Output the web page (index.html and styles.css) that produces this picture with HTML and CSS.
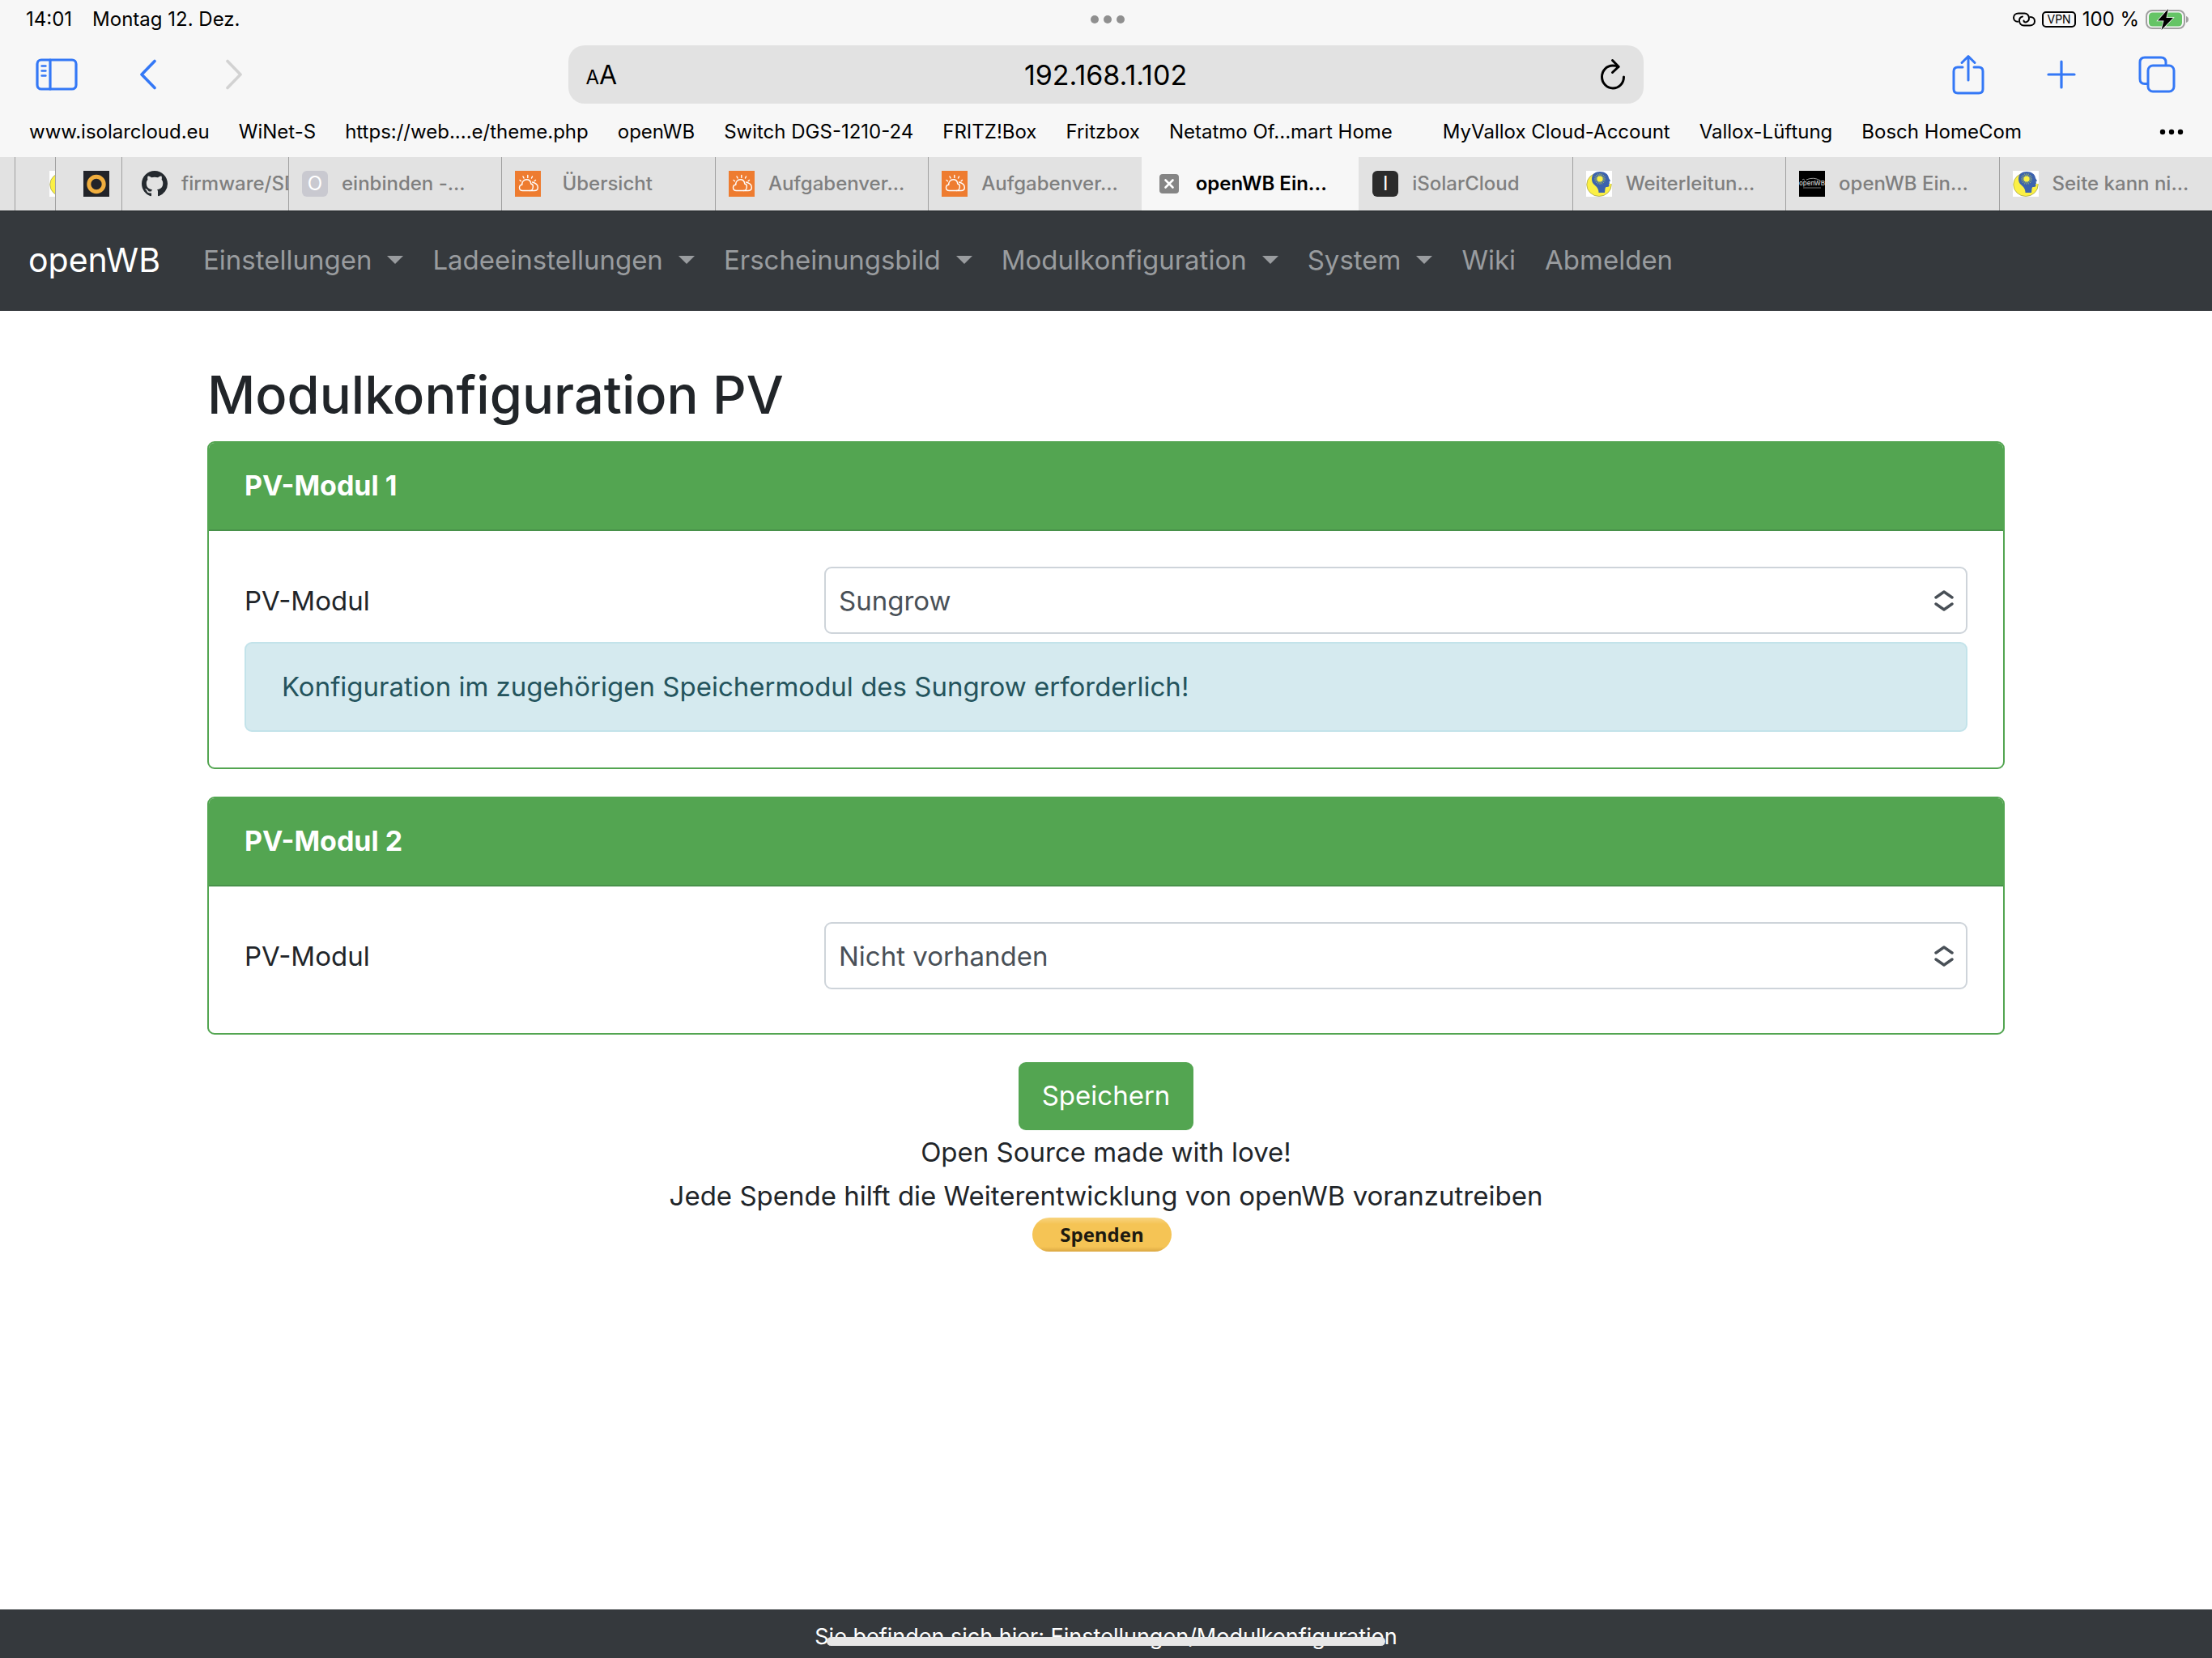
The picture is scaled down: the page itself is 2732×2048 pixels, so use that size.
FILE: index.html
```html
<!DOCTYPE html>
<html lang="de">
<head>
  <meta charset="UTF-8" />
  <meta name="viewport" content="width=device-width, initial-scale=1.0" />
  <title>openWB Einstellungen</title>
  <link rel="stylesheet" href="styles.css">
</head>
<body>
  <!-- shared icons -->
  <svg class="defs" width="0" height="0" aria-hidden="true">
    <symbol id="weather" viewBox="0 0 32 32">
      <rect width="32" height="32" fill="#ee7c30"/>
      <g fill="none" stroke="#fff" stroke-width="1.4" stroke-linecap="round" stroke-linejoin="round">
        <path d="M8 24.500C5 24.500 4 22.500 4 20.800C4 18.800 5.500 17.300 7.300 17.200C7 13.500 9.500 10.800 12.800 10.800C16.200 10.800 18 13 18.200 16C20.500 16.500 21 18.500 20.800 20C20.500 23 19 24.500 17 24.500Z" transform="translate(1.500 0)"/>
        <path d="M21.500 14C25.500 15 28.300 17.500 28.300 20.500C28.300 23.500 26.500 24.500 24 24.500H18.500"/>
        <path d="M15.800 5.500V8.500M10 7L11 9M21.500 7L20.500 9M6 11.500L7.500 12.700M25.500 11.500L24 12.700"/>
      </g>
    </symbol>
    <symbol id="head" viewBox="0 0 32 32">
      <rect width="32" height="32" fill="#fff"/>
      <ellipse cx="16" cy="17" rx="15.300" ry="14.500" fill="#fbf045" stroke="#8c8b4a" stroke-width=".6"/>
      <path d="M21 1L32 1V16H28Z" fill="#fff"/>
      <path d="M7 10C7 4 11.500 1 17 1C23 1 27.500 4 28 9L30 12.500L28.500 13.500L29 15.500L28 16.500L28.500 18.500C28.500 20 26 20 24.500 20C23 21.500 23.500 24 23 27H15.500C15.500 22 13 20 10.500 17.500C8 15.500 7 13 7 10Z" fill="#3c62ae"/>
      <path d="M17 3V17M10 10H24M12 5L22 15M22 5L12 15M14.300 3.500L19.700 16.500M19.700 3.500L14.300 16.500M10.500 7.300L23.500 12.700M23.500 7.300L10.500 12.700" stroke="#9eb566" stroke-width=".9"/>
      <circle cx="17" cy="10" r="3.600" fill="#fbf045"/>
    </symbol>
  </svg>

  <header class="browser">
    <div class="status-bar">
      <div class="status-left"><span>14:01</span><span>Montag 12. Dez.</span></div>
      <svg width="42" height="10" viewBox="0 0 42 10" fill="#8f8f8f"><circle cx="5" cy="5" r="5"/><circle cx="21" cy="5" r="5"/><circle cx="37" cy="5" r="5"/></svg>
      <div class="status-right">
        <svg width="28" height="18" viewBox="0 0 28 18" fill="none" stroke="#000" stroke-width="2" stroke-linecap="round"><path d="M12 5.500C9.500 6 8 8 8 10.500C8 14 10.500 16.500 13.500 16.500H21C24.500 16.500 27 14.500 27 11.200C27 8.200 25 6 21.800 6"/><path d="M6 11.800C3 11.800 1 9.700 1 6.800C1 3.500 3.500 1.500 7 1.500H14.500C17.500 1.500 20 4 20 7.500C20 10 18.500 11.800 16 12.500C14.500 12.500 13.500 11.800 13.500 10.500"/></svg>
        <span class="vpn">VPN</span>
        <span>100 %</span>
        <svg width="54" height="26" viewBox="0 0 54 26"><rect x="1" y="2" width="47" height="22" rx="7" fill="none" stroke="#a0a0a0" stroke-width="2"/><rect x="4" y="4.500" width="41" height="17" rx="4.500" fill="#65c466"/><path d="M50 9C52.500 10 53 11.500 53 13S52.500 16 50 17Z" fill="#a0a0a0"/><path d="M28 0L15 14.500H22.500L19.500 26L34 11H25.500Z" fill="#000" stroke="#f7f7f7" stroke-width="1.500" paint-order="stroke"/></svg>
      </div>
    </div>

    <div class="toolbar">
      <div class="tools tools-left">
        <button type="button" aria-label="Seitenleiste"><svg width="52" height="40" viewBox="0 0 52 40" fill="none" stroke="#3478f6" stroke-width="3.200" stroke-linecap="round"><rect x="2" y="2" width="48" height="36" rx="5"/><path d="M18 2V38"/><path d="M7.500 9.500H12.500M7.500 15.500H12.500M7.500 21.500H12.500" stroke-width="2.400"/></svg></button>
        <button type="button" aria-label="Zurück"><svg width="22" height="38" viewBox="0 0 22 38" fill="none" stroke="#3478f6" stroke-width="3.600" stroke-linecap="round" stroke-linejoin="round"><path d="M19 2.500L3 19L19 35.500"/></svg></button>
        <button type="button" aria-label="Vor" disabled><svg width="22" height="38" viewBox="0 0 22 38" fill="none" stroke="#d2d2d2" stroke-width="3.600" stroke-linecap="round" stroke-linejoin="round"><path d="M3 2.500L19 19L3 35.500"/></svg></button>
      </div>
      <div class="address">
        <button type="button" class="text-size" aria-label="Textgröße"><small>A</small>A</button>
        <input type="text" value="192.168.1.102" aria-label="Adresse">
        <button type="button" aria-label="Neu laden"><svg width="32" height="40" viewBox="0 0 32 40" fill="none" stroke="#000" stroke-width="3" stroke-linecap="round" stroke-linejoin="round"><path d="M23 10.500C20.800 9.300 18.500 9 16 9C8 9 2.500 15.500 2.500 23S8.500 37 16 37S29.500 31 29.500 23"/><path d="M15.500 2.500L23 10.300L15.500 17.500"/></svg></button>
      </div>
      <div class="tools tools-right">
        <button type="button" aria-label="Teilen"><svg width="40" height="50" viewBox="0 0 40 50" fill="none" stroke="#3478f6" stroke-width="3" stroke-linecap="round" stroke-linejoin="round"><path d="M13 16H7Q2 16 2 21V43Q2 48 7 48H33Q38 48 38 43V21Q38 16 33 16H27"/><path d="M20 32V3M12 10.500L20 2.500L28 10.500"/></svg></button>
        <button type="button" aria-label="Neuer Tab"><svg width="36" height="36" viewBox="0 0 36 36" stroke="#3478f6" stroke-width="3.200" stroke-linecap="round"><path d="M18 2V34M2 18H34"/></svg></button>
        <button type="button" aria-label="Tabübersicht"><svg width="46" height="46" viewBox="0 0 46 46" fill="none" stroke="#3478f6" stroke-width="3"><rect x="12" y="12" width="32" height="32" rx="6"/><path d="M12 34.500H8Q2 34.500 2 28.500V8Q2 2 8 2H28Q34 2 34 8V12"/></svg></button>
      </div>
    </div>

    <nav class="bookmarks">
      <a href="#">www.isolarcloud.eu</a>
      <a href="#">WiNet-S</a>
      <a href="#">https://web....e/theme.php</a>
      <a href="#">openWB</a>
      <a href="#">Switch DGS-1210-24</a>
      <a href="#">FRITZ!Box</a>
      <a href="#">Fritzbox</a>
      <a href="#" class="wide">Netatmo Of...mart Home</a>
      <a href="#">MyVallox Cloud-Account</a>
      <a href="#">Vallox-Lüftung</a>
      <a href="#">Bosch HomeCom</a>
      <button type="button" aria-label="Mehr"><svg width="30" height="8" viewBox="0 0 30 8"><circle cx="4" cy="4" r="3.200"/><circle cx="15" cy="4" r="3.200"/><circle cx="26" cy="4" r="3.200"/></svg></button>
    </nav>

    <div class="tabs">
      <div class="tab sliver"></div>
      <div class="tab stub"><svg class="favicon"><use href="#head"/></svg></div>
      <div class="tab small"><svg class="favicon" viewBox="0 0 32 32"><rect width="32" height="32" fill="#222429"/><circle cx="16" cy="16.500" r="9.200" fill="none" stroke="#f0ae3e" stroke-width="5"/></svg></div>
      <div class="tab cut"><svg class="favicon" viewBox="0 0 16 16" fill="#24292e"><path d="M8 0C3.580 0 0 3.580 0 8c0 3.540 2.290 6.530 5.470 7.590.4.070.55-.17.55-.38 0-.19-.01-.82-.01-1.490-2.010.37-2.530-.49-2.690-.94-.09-.23-.48-.94-.82-1.130-.28-.15-.68-.52-.01-.53.63-.01 1.080.58 1.230.82.72 1.210 1.870.87 2.330.66.07-.52.28-.87.51-1.070-1.780-.2-3.640-.89-3.640-3.950 0-.87.31-1.590.82-2.150-.08-.2-.36-1.020.08-2.120 0 0 .67-.21 2.200.82.640-.18 1.320-.27 2-.27s1.360.09 2 .27c1.530-1.040 2.200-.82 2.200-.82.440 1.100.160 1.920.080 2.120.510.560.820 1.270.820 2.150 0 3.070-1.870 3.750-3.650 3.950.290.250.540.730.540 1.480 0 1.070-.01 1.930-.01 2.200 0 .210.150.460.550.380A8.010 8.010 0 0 0 16 8c0-4.420-3.580-8-8-8z"/></svg><span>firmware/SD</span></div>
      <div class="tab"><span class="favicon letter">O</span><span>einbinden -...</span></div>
      <div class="tab"><svg class="favicon"><use href="#weather"/></svg><span class="short">Übersicht</span></div>
      <div class="tab"><svg class="favicon"><use href="#weather"/></svg><span>Aufgabenver...</span></div>
      <div class="tab"><svg class="favicon"><use href="#weather"/></svg><span>Aufgabenver...</span></div>
      <div class="tab active"><button type="button" aria-label="Tab schließen"><svg width="24" height="24" viewBox="0 0 24 24"><rect width="24" height="24" rx="4" fill="#858585"/><path d="M7.500 7.500L16.500 16.500M16.500 7.500L7.500 16.500" stroke="#fff" stroke-width="2.600" stroke-linecap="round"/></svg></button><span>openWB Ein...</span></div>
      <div class="tab"><span class="favicon letter dark">I</span><span>iSolarCloud</span></div>
      <div class="tab"><svg class="favicon"><use href="#head"/></svg><span>Weiterleitun...</span></div>
      <div class="tab"><svg class="favicon" viewBox="0 0 32 32"><rect width="32" height="32"/><path d="M4 11Q6 9 7 12M9 11Q18 7 26 12" fill="none" stroke="#999" stroke-width="1"/><text x="16" y="18" font-size="8" fill="#ccc" text-anchor="middle">openWB</text><path d="M5 21H27" stroke="#777"/></svg><span>openWB Ein...</span></div>
      <div class="tab"><svg class="favicon"><use href="#head"/></svg><span>Seite kann ni...</span></div>
    </div>
  </header>

  <nav class="navbar">
    <a class="brand" href="#">openWB</a>
    <a class="nav-link dropdown" href="#">Einstellungen</a>
    <a class="nav-link dropdown" href="#">Ladeeinstellungen</a>
    <a class="nav-link dropdown" href="#">Erscheinungsbild</a>
    <a class="nav-link dropdown" href="#">Modulkonfiguration</a>
    <a class="nav-link dropdown" href="#">System</a>
    <a class="nav-link" href="#">Wiki</a>
    <a class="nav-link" href="#">Abmelden</a>
  </nav>

  <main class="container">
    <h1>Modulkonfiguration PV</h1>
    <form id="pvForm">
      <!-- PV-Modul 1 -->
      <section class="card">
        <div class="card-header">PV-Modul 1</div>
        <div class="card-body">
          <div class="form-row">
            <label for="pv1">PV-Modul</label>
            <select id="pv1"><option>Sungrow</option><option>Nicht vorhanden</option></select>
          </div>
          <div class="alert">Konfiguration im zugehörigen Speichermodul des Sungrow erforderlich!</div>
        </div>
      </section>

      <!-- PV-Modul 2 -->
      <section class="card">
        <div class="card-header">PV-Modul 2</div>
        <div class="card-body">
          <div class="form-row">
            <label for="pv2">PV-Modul</label>
            <select id="pv2"><option>Nicht vorhanden</option><option>Sungrow</option></select>
          </div>
        </div>
      </section>

      <div class="actions">
        <button type="submit" class="btn-save">Speichern</button>
        <p>Open Source made with love!</p>
        <p>Jede Spende hilft die Weiterentwicklung von openWB voranzutreiben</p>
        <div class="donate"><button type="button" class="btn-donate">Spenden</button></div>
      </div>
    </form>
  </main>

  <footer class="footer">Sie befinden sich hier: Einstellungen/Modulkonfiguration</footer>
  <div class="home-indicator"></div>
</body>
</html>
```
FILE: styles.css
```css
* { box-sizing:border-box; }
body { margin:0; min-height:100vh; display:flex; flex-direction:column; background:#fff; color:#212529; font-family:Inter,"Liberation Sans",sans-serif; font-size:33px; line-height:54px; }
a { color:inherit; text-decoration:none; }
button,input,select { font:inherit; color:inherit; }
button { padding:0; border:none; background:none; cursor:pointer; }
svg { display:block; }
.defs { position:absolute; }

/* browser chrome */
.browser { background:#f7f7f7; color:#000; font-size:24px; line-height:30px; }
.status-bar { display:grid; grid-template-columns:1fr auto 1fr; align-items:center; height:48px; padding:0 28px 0 32px; }
.status-left { display:flex; gap:25px; }
.status-right { display:flex; gap:8px; align-items:center; justify-content:flex-end; }
.vpn { border:2px solid #000; border-radius:5px; padding:0 4px; font-size:14px; line-height:16px; }

.toolbar { display:grid; grid-template-columns:1fr 1328px 1fr; align-items:center; height:88px; padding:0 45px 0 44px; }
.tools { display:flex; align-items:center; }
.tools-left { gap:76px; }
.tools-left button + button + button { margin-left:8px; }
.tools-right { gap:77px; justify-content:flex-end; }
.address { display:flex; align-items:center; height:72px; padding:0 22px; border-radius:20px; background:#e2e2e2; }
.address input { flex:1; min-width:0; border:none; background:none; text-align:center; font-size:34px; padding:0 8px 0 0; }
.text-size { font-size:32px; width:40px; padding-top:4px; text-align:left; }
.text-size small { font-size:24px; }

.bookmarks { display:flex; gap:36px; align-items:center; height:58px; padding:0 35px 4px 36px; white-space:nowrap; }
.bookmarks .wide { margin-right:26px; }
.bookmarks button { margin-left:auto; }

.tabs { display:flex; height:67px; background:#e2e2e2; border-bottom:1px solid #24282b; color:#7f7f7f; font-weight:500; }
.tab { flex:1 1 0; min-width:0; display:flex; gap:17px; align-items:center; padding-left:16px; border-left:1px solid #a0a0a0; overflow:hidden; white-space:nowrap; }
.tab.sliver { flex:0 0 18px; border:none; }
.tab.stub { flex:0 0 50px; padding-left:42px; }
.tab.small { flex:0 0 82px; padding-left:34px; }
.tab.cut { flex:0 0 206px; padding-left:24px; }
.tab.active { background:#f7f7f7; color:#000; font-weight:600; padding-left:21px; gap:21px; border-left-color:#f7f7f7; }
.tab.active + .tab { border-left-color:#e2e2e2; }
.favicon { flex:none; width:32px; height:32px; }
.letter { border-radius:6px; background:#c9c9d0; color:#fff; text-align:center; font-size:24px; font-weight:400; line-height:32px; }
.letter.dark { background:#2c2c2c; }
.short { padding-left:9px; }

/* page */
.navbar { display:flex; align-items:center; height:123px; padding:0 17px 3px; background:#35393d; color:#999c9f; }
.brand { color:#fff; font-size:41px; padding:0 35px 0 18px; }
.nav-link { padding:0 18px; }
.dropdown::after { content:""; display:inline-block; margin-left:19px; vertical-align:7px; border:10px solid transparent; border-top-color:currentColor; border-bottom:none; }

.container { flex:1; width:100%; max-width:2220px; margin:0 auto; padding-top:60px; }
h1 { margin:0 0 14px; font-size:65px; line-height:87px; font-weight:500; }
.card { margin-bottom:34px; border:2px solid #53a551; border-radius:9px; overflow:hidden; }
.card-header { padding:26px 44px 27px; background:#53a551; border-bottom:2px solid #48914a; color:#fff; font-size:34px; font-weight:700; }
.card-body { padding:44px; }
.form-row { display:grid; grid-template-columns:repeat(3,1fr); align-items:center; column-gap:20px; margin-bottom:10px; }
.form-row select { grid-column:span 2; appearance:none; width:100%; height:83px; padding:0 16px; border:2px solid #ced4da; border-radius:9px; color:#495057; background:#fff url("data:image/svg+xml,%3Csvg xmlns='http://www.w3.org/2000/svg' viewBox='0 0 24 28' fill='none' stroke='%23495057' stroke-width='3.4' stroke-linecap='round' stroke-linejoin='round'%3E%3Cpath d='M2 10L12 3L22 10M2 18L12 25L22 18'/%3E%3C/svg%3E") no-repeat right 15px center/24px 28px; }
.alert { padding:26px 44px 27px; border:2px solid #c3e3ea; border-radius:9px; background:#d5eaef; color:#24545d; }

.actions { text-align:center; }
.actions p { margin:0; }
.btn-save { display:block; margin:0 auto; padding:14px 29px 16px; border-radius:9px; background:#53a551; color:#fff; }
.donate { padding-right:10px; }
.btn-donate { display:block; width:172px; height:42px; margin:0 auto; border-radius:21px; background:linear-gradient(#f8d480,#f5c455 8px,#f5c455 36px,#dba843); color:#1d1a10; font:bold 24px/40px "Open Sans",sans-serif; }

.footer { height:60px; padding-top:4px; background:#35393d; color:#fff; text-align:center; font-size:27px; line-height:60px; }
.home-indicator { position:fixed; left:50%; bottom:15px; width:690px; height:11px; margin-left:-345px; border-radius:6px; background:#e7e7e7; }
```
